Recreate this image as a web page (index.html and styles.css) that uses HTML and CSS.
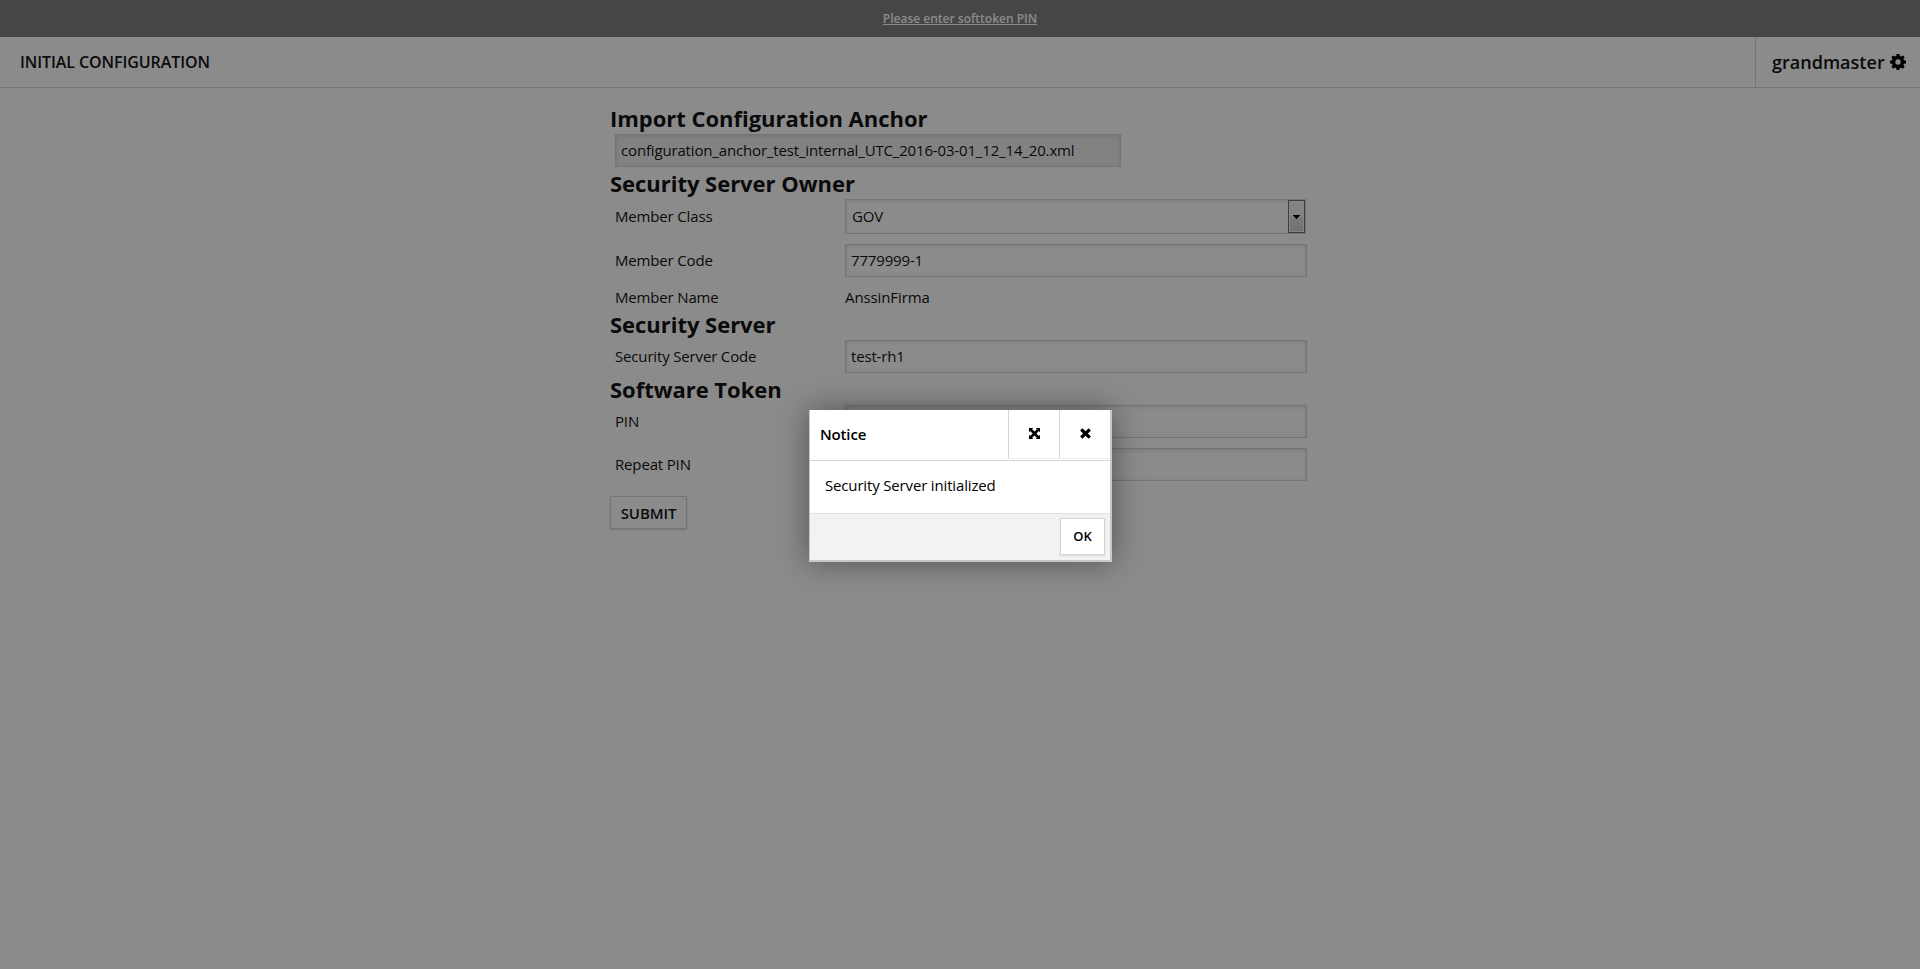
FILE: index.html
```html
<!DOCTYPE html>
<html lang="en">
<head>
<meta charset="utf-8">
<title>Initial Configuration</title>
<link rel="stylesheet" href="styles.css">
</head>
<body>
<div class="alert-bar"><a class="alert-link">Please enter softtoken PIN</a></div>
<header class="header">
  <h1 class="page-title">INITIAL CONFIGURATION</h1>
  <div class="user">grandmaster
    <svg class="gear" viewBox="0 0 16 16"><path fill-rule="evenodd" d="M6.6 0h2.8l.4 2.1 1.2.5L12.800 1.400l1.900 1.900-1.300 1.800.5 1.200 2.100.3v2.800l-2.100.4-.5 1.200 1.300 1.700-1.900 2-1.800-1.300-1.200.5-.4 2.100H6.600l-.4-2.100-1.200-.5-1.700 1.300-2-2 1.300-1.700-.5-1.200L0 9.400V6.600l2.100-.3.500-1.200-1.300-1.800 2-1.900L5 2.600l1.200-.5zM8 5.300a2.700 2.700 0 1 0 0 5.400 2.700 2.700 0 0 0 0-5.400z"/></svg>
  </div>
</header>
<main class="form">
  <h2 class="heading heading-first">Import Configuration Anchor</h2>
  <div class="field anchor">configuration_anchor_test_internal_UTC_2016-03-01_12_14_20.xml</div>
  <h2 class="heading">Security Server Owner</h2>
  <div class="row row-select"><span class="label">Member Class</span>
    <div class="field select">GOV<span class="drop"><svg class="arrow" viewBox="0 0 7 4"><path d="M0 0h7v1H6v1H5v1H4v1H3V3H2V2H1V1H0z"/></svg></span></div></div>
  <div class="row"><span class="label">Member Code</span><div class="field">7779999-1</div></div>
  <div class="row row-text"><span class="label">Member Name</span><span class="value">AnssinFirma</span></div>
  <h2 class="heading">Security Server</h2>
  <div class="row"><span class="label">Security Server Code</span><div class="field">test-rh1</div></div>
  <h2 class="heading">Software Token</h2>
  <div class="row row-pin"><span class="label">PIN</span><div class="field"></div></div>
  <div class="row"><span class="label">Repeat PIN</span><div class="field"></div></div>
  <button class="submit">SUBMIT</button>
</main>
<div class="overlay"></div>
<section class="dialog">
  <div class="dialog-head">
    <span class="dialog-title">Notice</span>
    <span class="dialog-btn"><svg class="icon" viewBox="0 0 11 11"><path d="M0 0h4.200L3.100 1.200 5.500 3.600 7.900 1.200 6.800 0H11v4.200L9.800 3.100 7.400 5.500 9.800 7.900 11 6.800V11H6.800l1.100-1.200L5.500 7.400 3.100 9.800 4.200 11H0V6.800l1.200 1.100L3.600 5.500 1.200 3.100 0 4.200z"/></svg></span>
    <span class="dialog-btn"><svg class="icon" viewBox="0 0 11 11"><path d="M2.400.3 5.500 3.200 8.600.3 10.900 2.500 7.900 5.500 10.900 8.500 8.600 10.700 5.500 7.800 2.400 10.700.1 8.500 3.100 5.500.1 2.500z"/></svg></span>
  </div>
  <div class="dialog-body">Security Server initialized</div>
  <div class="dialog-foot"><button class="ok">OK</button></div>
</section>
</body>
</html>
```
FILE: styles.css
```css
* { box-sizing: border-box; }
body {
  margin: 0;
  height: 969px;
  overflow: hidden;
  background: #fff;
  color: #141414;
  font: 15px/20px "Open Sans", "Noto Sans", sans-serif;
  letter-spacing: -.16px;
}
.alert-bar {
  height: 37px;
  background: #808080;
  text-align: center;
  font-size: 12px;
  font-weight: 600;
  line-height: 38px;
  letter-spacing: 0;
}
.alert-link { color: #fff; text-decoration: underline; }
.header {
  display: flex;
  justify-content: space-between;
  height: 51px;
  border-bottom: 1px solid #d5d5d5;
}
.page-title {
  margin: 0 0 0 20px;
  font-size: 16px;
  font-weight: 600;
  line-height: 50px;
  letter-spacing: -.08px;
}
.user {
  display: flex;
  align-items: center;
  gap: 5px;
  width: 165px;
  padding-left: 16px;
  border-left: 1px solid #d5d5d5;
  font-size: 18px;
  font-weight: 600;
  letter-spacing: .02px;
}
.gear { width: 16px; height: 16px; }
.form { width: 720px; margin: 14px 0 0 610px; }
.heading {
  margin: 0;
  height: 32px;
  font-size: 22px;
  font-weight: 700;
  line-height: 32px;
  letter-spacing: -.03px;
}
.heading-first { margin-bottom: 2px; }
.field {
  width: 462px;
  height: 33px;
  padding: 0 5px;
  border: 1px solid #d5d5d5;
  box-shadow: inset 0 1px 4px rgba(0, 0, 0, .12);
  line-height: 31px;
}
.anchor {
  width: 506px;
  margin: -2px 0 0 5px;
  background: #eee;
}
.row { display: flex; align-items: center; height: 33px; }
.label { width: 235px; padding: 0 0 2px 5px; }
.value { padding-bottom: 2px; letter-spacing: -.1px; }
.row-select { height: 35px; margin-bottom: 10px; }
.select {
  display: flex;
  justify-content: space-between;
  align-items: center;
  width: 461px;
  height: 35px;
  padding: 0 0 0 6px;
}
.drop {
  display: flex;
  align-items: center;
  justify-content: center;
  width: 17px;
  height: 33px;
  border: 1px solid #707070;
  background: linear-gradient(#f2f2f2 50%, #e0e0e0 50%, #d0d0d0);
  box-shadow: inset 0 0 0 1px #f8f8f8;
}
.arrow { width: 7px; height: 4px; }
.row-text { height: 31px; padding-top: 10px; }
.row-pin { margin-bottom: 10px; }
.submit {
  display: block;
  width: 77px;
  height: 33px;
  margin-top: 15px;
  padding: 0;
  border: 1px solid #d5d5d5;
  background: #fff;
  box-shadow: 0 1px 2px rgba(0, 0, 0, .15);
  color: #141414;
  font: 600 15px "Open Sans", sans-serif;
  letter-spacing: -.1px;
}
.overlay {
  position: absolute;
  inset: 0;
  background: rgba(0, 0, 0, .455);
}
.dialog {
  position: absolute;
  left: 809px;
  top: 410px;
  width: 303px;
  height: 152px;
  border: solid #c8c8c8;
  border-width: 0 2px 2px 1px;
  background: #fff;
  box-shadow: 0 0 30px rgba(0, 0, 0, .42);
  color: #000;
}
.dialog-head {
  display: flex;
  height: 51px;
  border-bottom: 1px solid #d5d5d5;
}
.dialog-title {
  flex: 1;
  padding-left: 10px;
  font-size: 15px;
  font-weight: 600;
  line-height: 48px;
}
.dialog-btn {
  display: flex;
  align-items: center;
  justify-content: center;
  width: 51px;
  height: 49px;
  padding-bottom: 1px;
  border-left: 1px solid #d5d5d5;
  border-bottom: 1px solid #eee;
}
.icon { width: 11px; height: 11px; }
.dialog-body { height: 52px; padding: 14px 15px; }
.dialog-foot {
  display: flex;
  justify-content: flex-end;
  height: 47px;
  padding: 4px 5px;
  border-top: 1px solid #e0e0e0;
  background: #f2f2f2;
}
.ok {
  width: 45px;
  height: 37px;
  padding: 0 0 1px;
  border: 1px solid #d5d5d5;
  background: #fff;
  box-shadow: 0 1px 2px rgba(0, 0, 0, .1);
  font: 600 13px "Open Sans", sans-serif;
}
```
